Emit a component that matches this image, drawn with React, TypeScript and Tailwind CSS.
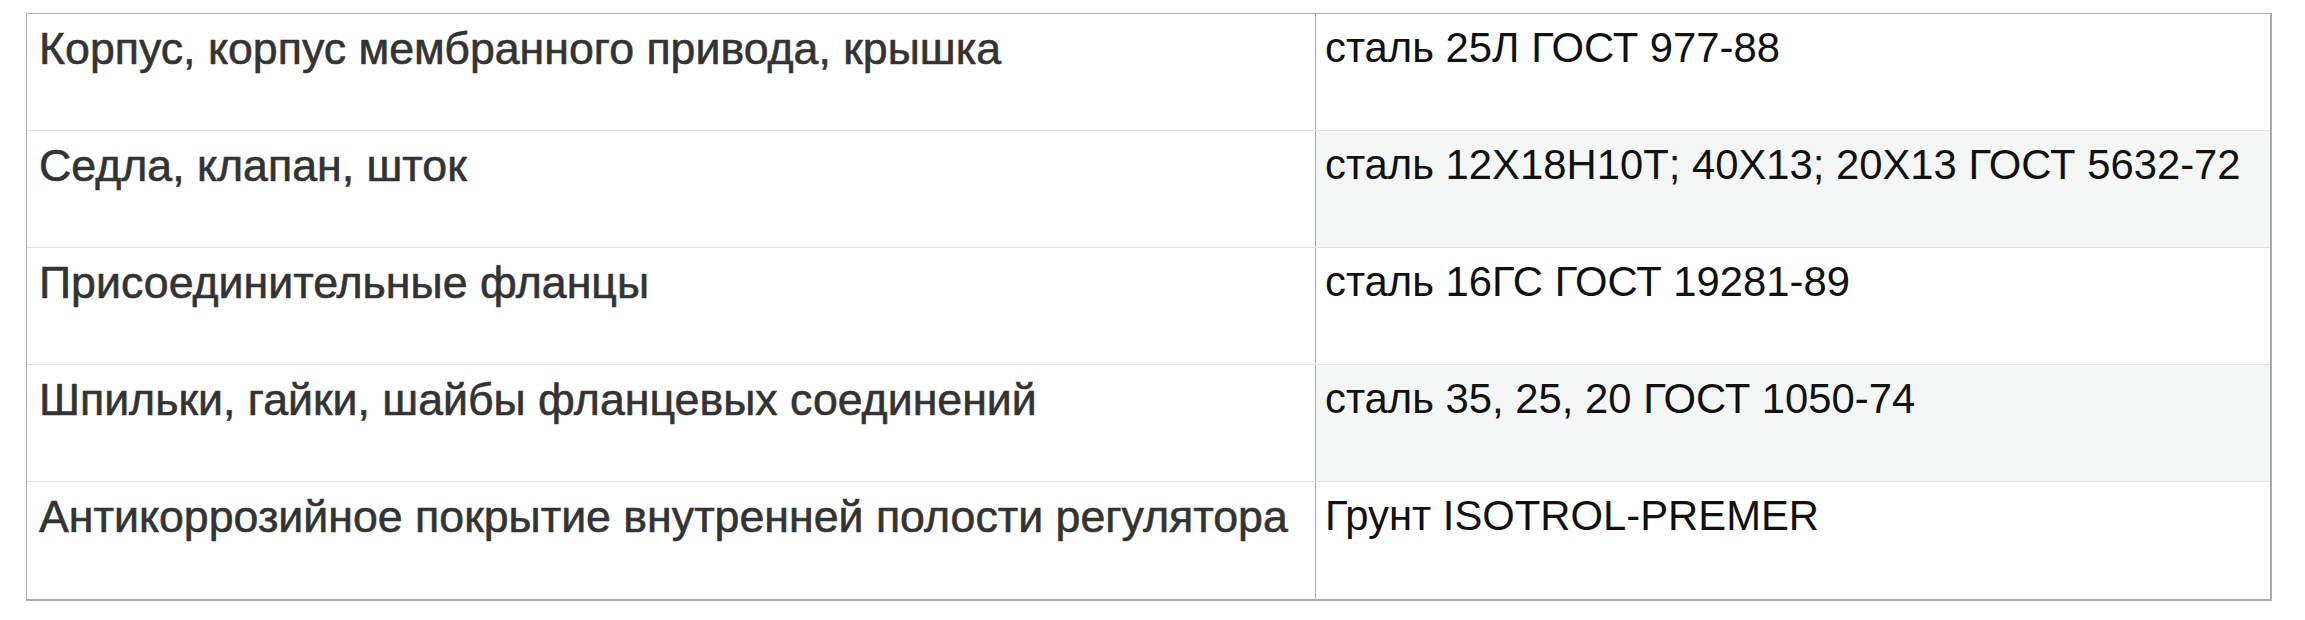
const rows = [
  { name: "Корпус, корпус мембранного привода, крышка", value: "сталь 25Л ГОСТ 977-88" },
  { name: "Седла, клапан, шток", value: "сталь 12Х18Н10Т; 40Х13; 20Х13 ГОСТ 5632-72" },
  { name: "Присоединительные фланцы", value: "сталь 16ГС ГОСТ 19281-89" },
  { name: "Шпильки, гайки, шайбы фланцевых соединений", value: "сталь 35, 25, 20 ГОСТ 1050-74" },
  { name: "Антикоррозийное покрытие внутренней полости регулятора", value: "Грунт ISOTROL-PREMER" },
];

export default function App() {
  return (
    <div className="w-[2305px] h-[620px] bg-white pt-[13px] pl-[26px] font-['Liberation_Sans',Arial,sans-serif]">
      <div className="w-[2246px] border-t border-l border-r-2 border-b-2 border-[#ababab]">
        {rows.map((r, i) => (
          <div
            key={i}
            className={`grid grid-cols-[1288px_1fr] h-[117px] ${i < rows.length - 1 ? "border-b border-[#e3e3e3]" : ""}`}
          >
            <div className="pl-[12px] pt-[9px] text-[44.7px] leading-[52px] text-[#333] [-webkit-text-stroke:0.6px_#333] whitespace-nowrap">
              {r.name}
            </div>
            <div
              className={`border-l-[1.5px] border-[#a8a8a8] pl-[9px] pt-[10px] text-[41.8px] leading-[48px] text-[#111] whitespace-nowrap ${i % 2 === 1 ? "bg-[#f4f7f6]" : "bg-white"}`}
            >
              {r.value}
            </div>
          </div>
        ))}
      </div>
    </div>
  );
}
